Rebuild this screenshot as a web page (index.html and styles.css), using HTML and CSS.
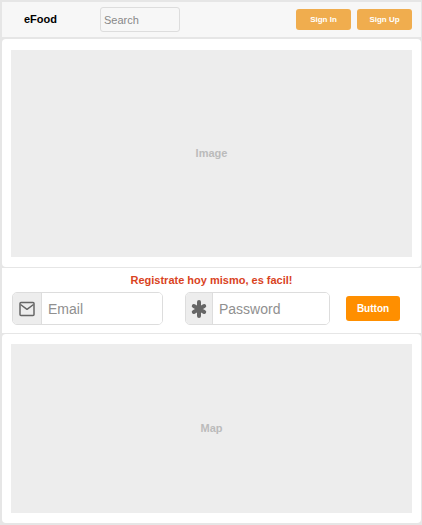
FILE: index.html
```html
<!DOCTYPE html>
<html lang="es">
<head>
<meta charset="utf-8">
<meta name="viewport" content="width=device-width, initial-scale=1">
<title>eFood</title>
<link rel="stylesheet" href="styles.css">
</head>
<body>
<header class="navbar">
  <a class="brand" href="#">eFood</a>
  <input class="search" type="search" placeholder="Search" aria-label="Search">
  <div class="actions">
    <button class="btn btn-small" type="button">Sign In</button>
    <button class="btn btn-small" type="button">Sign Up</button>
  </div>
</header>
<main>
  <section class="panel">
    <div class="placeholder placeholder-image">Image</div>
  </section>
  <section class="signup">
    <h1 class="signup-title">Registrate hoy mismo, es facil!</h1>
    <form class="signup-form">
      <div class="field field-email">
        <label class="addon" for="email" aria-label="Email">
          <svg width="16" height="16" viewBox="0 0 16 16" fill="none" stroke="#666" stroke-width="1.500" stroke-linejoin="round" aria-hidden="true">
            <rect x="1" y="1.500" width="14" height="13" rx="1"/>
            <path d="M1.500 3.500L8 8.300l6.500-4.800"/>
          </svg>
        </label>
        <input class="field-input" id="email" type="email" placeholder="Email">
      </div>
      <div class="field">
        <label class="addon addon-narrow" for="password" aria-label="Password">
          <svg width="16" height="18" viewBox="0 0 16 18" stroke="#666" stroke-width="4" stroke-linecap="round" aria-hidden="true">
            <path d="M8 2v14M2.800 6l10.400 6M13.200 6L2.800 12"/>
          </svg>
        </label>
        <input class="field-input" id="password" type="password" placeholder="Password">
      </div>
      <button class="btn btn-submit" type="submit">Button</button>
    </form>
  </section>
  <section class="panel panel-map">
    <div class="placeholder placeholder-map">Map</div>
  </section>
</main>
</body>
</html>
```
FILE: styles.css
```css
* {
  box-sizing: border-box;
}

body {
  margin: 0;
  padding: 2px 1px 2px 2px;
  background: #e6e6e6;
  font: bold 11px/13px "Liberation Sans", Arial, sans-serif;
}

.navbar {
  display: flex;
  align-items: center;
  height: 35px;
  margin-bottom: 2px;
  padding: 0 9px 0 22px;
  background: #f7f7f7;
}

.brand {
  width: 76px;
  color: #000;
  text-decoration: none;
}

.search {
  width: 80px;
  height: 25px;
  padding: 0 3px;
  border: 1px solid #ddd;
  border-radius: 3px;
  background: #f7f7f7;
  font: 11px/13px "Liberation Sans", Arial, sans-serif;
}

input::placeholder {
  color: #909090;
  opacity: 1;
}

.search::placeholder {
  color: #888;
}

.actions {
  display: flex;
  gap: 6px;
  margin-left: auto;
}

.btn {
  padding: 0;
  border: 0;
  border-radius: 3px;
  color: #fff;
  font: inherit;
}

.btn-small {
  width: 55px;
  height: 21px;
  background: #f0ad4e;
  font-size: 8px;
}

main {
  background: #e6e6e6;
}

.panel {
  padding: 11px 9px 10px;
  border-radius: 4px;
  background: #fff;
}

.panel-map {
  padding-top: 10px;
}

.placeholder {
  display: flex;
  align-items: center;
  justify-content: center;
  background: #ededed;
  color: #bbb;
}

.placeholder-image {
  height: 207px;
}

.signup {
  margin: 1px 0;
  padding: 6px 21px 8px 10px;
  background: #fff;
}

.signup-title {
  margin: 0 0 5px;
  padding-left: 11px;
  font-size: 11px;
  line-height: 13px;
  text-align: center;
  color: #d9431e;
}

.signup-form {
  display: grid;
  grid-template-columns: 157fr 145fr 54px;
  column-gap: 16px;
  align-items: center;
}

.field {
  display: flex;
  height: 33px;
  border: 1px solid #ddd;
  border-radius: 5px;
  overflow: hidden;
}

.field-email {
  margin-right: 6px;
}

.addon {
  display: flex;
  flex: none;
  align-items: center;
  justify-content: center;
  width: 29px;
  border-right: 1px solid #ddd;
  background: #ededed;
}

.addon-narrow {
  width: 27px;
}

.field-input {
  flex: 1;
  min-width: 0;
  padding: 0 6px;
  border: 0;
  background: #fff;
  font: 14px/18px "Liberation Sans", Arial, sans-serif;
}

.btn-submit {
  height: 25px;
  background: #ff8f00;
  font-size: 10px;
}

.placeholder-map {
  height: 169px;
}
```
